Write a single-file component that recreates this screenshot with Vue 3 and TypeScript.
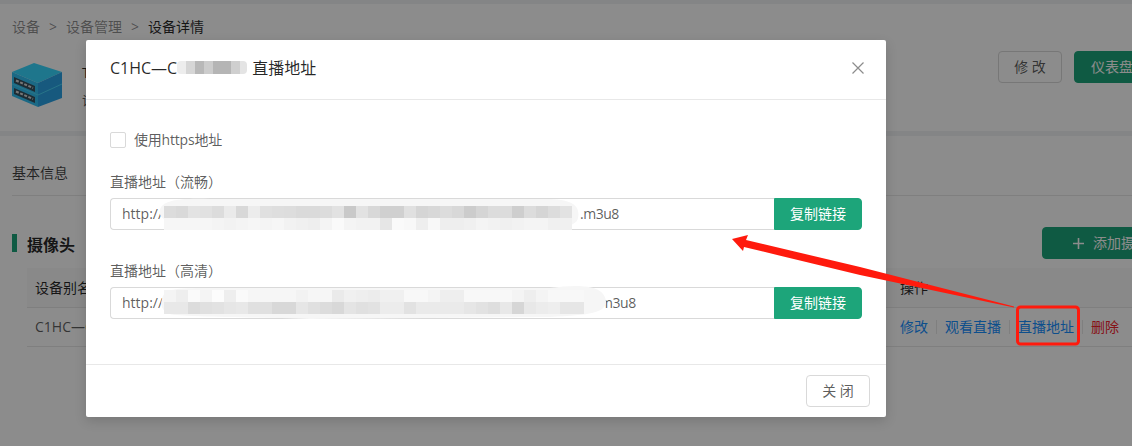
<template>
  <div class="screen">
    <div class="page">
      <section class="card head-card">
        <div class="crumbs">
          <span>设备</span><i>&gt;</i><span>设备管理</span><i>&gt;</i><b>设备详情</b>
        </div>
        <div class="device-row">
          <svg class="device-icon" width="50" height="45" viewBox="0 0 50 45">
            <path d="M22 0 50 9 26 20 0 9Z" fill="#38d8ff" />
            <path d="M0 9 26 20 26 44 0 33Z" fill="#32c0f2" />
            <path d="M26 20 50 9 50 35 26 44Z" fill="#2aa2e6" />
            <path d="M0 21 26 32 50 21" fill="none" stroke="#4ad4f6" stroke-width="1" />
            <path d="M2 14 23 23 23 29 2 20Z M2 25 23 34 23 40 2 31Z" fill="#35505f" />
            <path d="M4 17.5 21 25 M4 28.5 21 36" stroke="#d8d8d8" stroke-width="2" stroke-dasharray="3 1.5" />
          </svg>
          <div class="device-text">
            <div class="device-name">T1</div>
            <div class="device-sub">设备</div>
          </div>
          <div class="device-actions">
            <button class="btn">修 改</button>
            <button class="btn primary dash">仪表盘</button>
          </div>
        </div>
      </section>

      <section class="card body-card">
        <div class="tab">基本信息</div>
        <div class="section-head">
          <h3>摄像头</h3>
          <button class="btn primary add">
            <svg width="11" height="11" viewBox="0 0 11 11">
              <path d="M5.5 0V11M0 5.5H11" stroke="#fff" stroke-width="1.6" />
            </svg>
            添加摄像头
          </button>
        </div>
        <div class="table">
          <div class="tr th">
            <span>设备别名</span>
            <span>操作</span>
          </div>
          <div class="tr">
            <span>C1HC—C1</span>
            <span class="ops">
              <a>修改</a><em></em><a>观看直播</a><em></em><a>直播地址</a><em></em><a class="danger">删除</a>
            </span>
          </div>
        </div>
      </section>
    </div>

    <div class="mask">
      <div class="modal">
        <header class="modal-head">
          <div class="modal-title">
            C1HC—C<span class="title-blur"><s v-for="(c, i) in titleCells" :key="i" :style="{ background: c }"></s></span>直播地址
          </div>
          <svg class="close" width="12" height="12" viewBox="0 0 12 12">
            <path d="M.5.5 11.5 11.5M11.5.5.5 11.5" stroke="#8c8c8c" stroke-width="1.2" fill="none" />
          </svg>
        </header>

        <div class="modal-body">
          <label class="check"><span class="box"></span>使用https地址</label>

          <div v-for="f in fields" :key="f.label" class="field">
            <div class="field-label">{{ f.label }}</div>
            <div class="input-group">
              <div class="input">
                http://<span class="suffix" :style="{ marginLeft: f.gap + 'px' }">{{ f.suffix }}</span>
                <svg class="mosaic" width="664" height="32" viewBox="0 0 664 32">
                  <path :d="f.blob" fill="#f6f6f6" />
                  <template v-for="(row, r) in f.rows" :key="r">
                    <rect
                      v-for="(shade, i) in row"
                      :key="i"
                      :x="54 + i * 12"
                      :y="f.top + r * 12"
                      width="12"
                      height="12"
                      :fill="'#' + shade + shade + shade"
                    />
                  </template>
                </svg>
              </div>
              <button class="btn primary copy">复制链接</button>
            </div>
          </div>
        </div>

        <footer class="modal-foot">
          <button class="btn">关 闭</button>
        </footer>
      </div>
    </div>

    <svg class="marks" width="1132" height="446" viewBox="0 0 1132 446">
      <path d="M732 239 748 235 746 240 860 267 1014 306.5 1014 307.5 860 275 744 247 743 251Z" fill="#ff1a0d" />
      <rect x="1017.5" y="307" width="61" height="37" rx="3" fill="none" stroke="#ff1a0d" stroke-width="3" />
    </svg>
  </div>
</template>

<script setup lang="ts">
interface Field {
  label: string
  suffix: string
  gap: number
  top: number
  blob: string
  rows: string[][]
}

const shades = (s: string) => s.split(' ')

const titleCells = ['#ededed', '#d6d6d6', '#b8b8b8', '#cccccc', '#b5b5b5', '#b5b5b5', '#cfcfcf', '#e4e4e4']

const fields: Field[] = [
  {
    label: '直播地址（流畅）',
    suffix: '.m3u8',
    gap: 417,
    top: 8,
    blob: 'M50 12C52 2 70 0 100 1 L440 1C466 2 470 10 468 20 C466 31 440 31 420 31 L240 31C160 30 120 27 70 24 C56 24 48 20 50 12Z',
    rows: [
      shades('dc d9 e3 e1 dc ea d8 ec e0 de dd da da dc e2 c9 e2 d8 d0 d0 e0 d5 d8 dc d8 cc d5 dc dc ce dc d5 dc e2'),
      shades('f6 f6 f6 f6 f4 f2 f4 f6 f4 f6 f2 f0 ee f4 fa f4 f2 f2 e6 fa f8 ee f8 ee ee f0 f4 f2 f0 f2 f4 f4 f0 f0'),
    ],
  },
  {
    label: '直播地址（高清）',
    suffix: 'm3u8',
    gap: 437,
    top: 3,
    blob: 'M52 12C54 2 64 1 100 1 L440 1C470 -3 494 -2 496 14 C496 26 480 28 440 30 L200 32C140 30 70 30 60 27 C52 24 50 18 52 12Z',
    rows: [
      shades('f4 ee fa f4 fc ee fa f6 f6 f6 f6 f2 f6 f6 ea f0 ee ec f0 f0 f8 f8 f4 ee ee f8 f8 f8 f8 f4 ee f4 f8 f8 f8'),
      shades('e8 e8 dc e0 e2 e6 e8 e0 e0 d8 d8 e6 e0 dc d8 e4 e0 e2 ec ec e2 ea ea ea ea e6 e2 de e8 d6 e8 ec ee e6 e6'),
    ],
  },
]
</script>

<style>
html,
body {
  margin: 0;
  background: #f0f2f5;
}
</style>

<style scoped>
.screen {
  position: relative;
  width: 1132px;
  height: 446px;
  overflow: hidden;
  font-family: "Open Sans", "Noto Sans CJK SC", sans-serif;
  font-size: 14px;
  line-height: 22px;
  color: rgba(0, 0, 0, 0.65);
}

.page {
  width: 1182px;
  padding-top: 4px;
  background: #f0f2f5;
}

.card {
  background: #fff;
  padding: 0 12px;
}

.head-card {
  height: 127px;
  padding-top: 12px;
  box-sizing: border-box;
  margin-bottom: 5px;
}

.crumbs {
  display: flex;
  color: rgba(0, 0, 0, 0.45);
}

.crumbs i {
  font-style: normal;
  margin: 0 9px;
}

.crumbs b {
  font-weight: 400;
  color: rgba(0, 0, 0, 0.85);
}

.device-row {
  display: flex;
  align-items: flex-start;
  margin-top: 13px;
}

.device-icon {
  margin: 12px 20px 0 0;
}

.device-text {
  margin-top: 11px;
}

.device-name {
  color: rgba(0, 0, 0, 0.85);
}

.device-sub {
  margin-top: 5px;
  font-size: 13px;
}

.device-actions {
  margin-left: auto;
  display: flex;
  gap: 12px;
}

.btn {
  height: 32px;
  padding: 0;
  width: 64px;
  border: 1px solid #d9d9d9;
  border-radius: 4px;
  background: #fff;
  color: rgba(0, 0, 0, 0.65);
  font: inherit;
}

.btn.primary {
  background: #1da57a;
  border-color: #1da57a;
  color: #fff;
}

.dash {
  width: 96px;
  text-align: left;
  padding-left: 16px;
}

.body-card {
  height: 310px;
  padding-top: 26px;
  box-sizing: border-box;
}

.tab {
  padding-bottom: 11px;
  border-bottom: 1px solid #e8e8e8;
  color: rgba(0, 0, 0, 0.75);
}

.section-head {
  display: flex;
  align-items: center;
  justify-content: space-between;
  margin-top: 31px;
}

.section-head h3 {
  margin: 4px 0 0;
  padding-left: 15px;
  position: relative;
  font-size: 16px;
  font-weight: 700;
  color: rgba(0, 0, 0, 0.85);
}

.section-head h3::before {
  content: "";
  position: absolute;
  left: 0;
  top: 0;
  width: 5px;
  height: 18px;
  background: #1da57a;
}

.add {
  width: 128px;
  display: flex;
  align-items: center;
  gap: 9px;
  padding-left: 30px;
  white-space: nowrap;
  overflow: hidden;
}

.add svg {
  flex: none;
}

.table {
  margin: 9px 0 0 15px;
}

.tr {
  display: grid;
  grid-template-columns: 865px 1fr;
  align-items: center;
  height: 38px;
  padding-left: 8px;
  border-bottom: 1px solid #e8e8e8;
}

.th {
  height: 39px;
  background: #fafafa;
  color: rgba(0, 0, 0, 0.85);
}

.ops {
  display: flex;
  align-items: center;
  white-space: nowrap;
}

.ops a {
  color: #1890ff;
}

.ops a.danger {
  color: #f5222d;
}

.ops em {
  width: 1px;
  height: 14px;
  margin: 0 8px;
  background: #e8e8e8;
}

.mask {
  position: absolute;
  inset: 0;
  padding: 40px 0 0 86px;
  background: rgba(0, 0, 0, 0.45);
}

.modal {
  width: 800px;
  height: 377px;
  display: flex;
  flex-direction: column;
  background: #fff;
  border-radius: 2px;
  box-shadow: 0 4px 12px rgba(0, 0, 0, 0.15);
}

.modal-head {
  display: flex;
  align-items: center;
  justify-content: space-between;
  height: 55px;
  flex: none;
  padding: 0 22px 4px 24px;
  border-bottom: 1px solid #e8e8e8;
}

.modal-title {
  display: flex;
  align-items: center;
  font-size: 16px;
  color: rgba(0, 0, 0, 0.85);
}

.title-blur {
  display: flex;
  width: 70px;
  height: 13px;
  margin-right: 5px;
  overflow: hidden;
  border-radius: 4px;
}

.title-blur s {
  width: 9px;
  flex: none;
}

.modal-body {
  flex: 1;
  padding: 29px 24px 0;
}

.check {
  display: flex;
  align-items: center;
  gap: 8px;
  letter-spacing: -0.2px;
  color: rgba(0, 0, 0, 0.65);
}

.box {
  width: 14px;
  height: 14px;
  border: 1px solid #d9d9d9;
  border-radius: 2px;
}

.field {
  margin-top: 30px;
}

.check + .field {
  margin-top: 20px;
}

.field-label {
  margin-bottom: 5px;
}

.input-group {
  display: flex;
  height: 32px;
}

.input {
  position: relative;
  flex: 1;
  box-sizing: border-box;
  padding-left: 11px;
  line-height: 30px;
  border: 1px solid #d9d9d9;
  border-right: 0;
  border-radius: 4px 0 0 4px;
  white-space: nowrap;
}

.suffix {
  letter-spacing: -0.5px;
}

.mosaic {
  position: absolute;
  left: -1px;
  top: -1px;
  overflow: visible;
}

.copy {
  width: 88px;
  border-radius: 0 4px 4px 0;
}

.modal-foot {
  flex: none;
  display: flex;
  justify-content: flex-end;
  padding: 10px 16px;
  border-top: 1px solid #e8e8e8;
}

.marks {
  position: absolute;
  left: 0;
  top: 0;
}
</style>
